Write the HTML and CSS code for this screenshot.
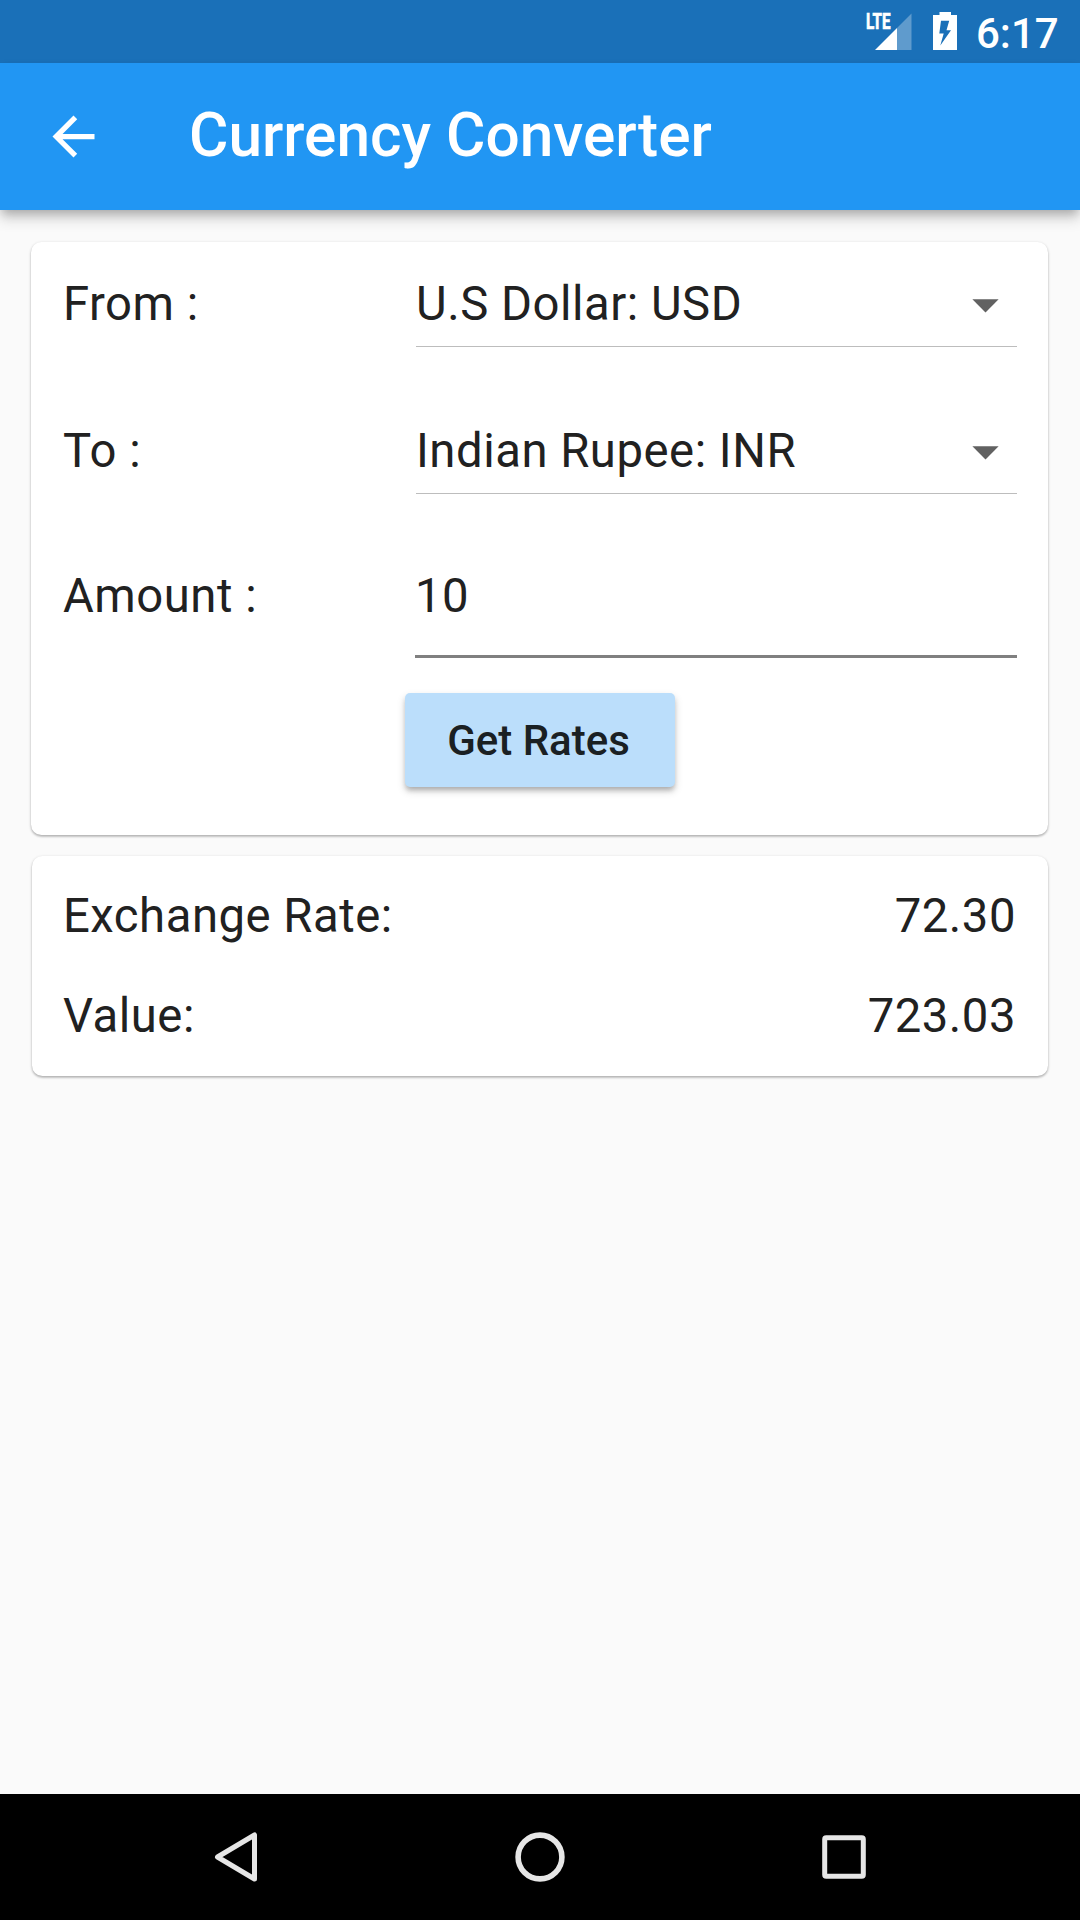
FILE: index.html
```html
<!DOCTYPE html>
<html lang="en">
<head>
<meta charset="utf-8">
<title>Currency Converter</title>
<link rel="stylesheet" href="styles.css">
</head>
<body>
<div class="screen">
  <div class="status-bar">
    <svg class="status-signal" width="48" height="50" viewBox="0 -12 48 50">
      <path d="M46.500 1.500V38H32V16z" fill="#fff" fill-opacity=".3"/>
      <path d="M10 38L32 16V38z" fill="#fff"/>
      <text class="lte" x="1" y="17" textLength="24.500" lengthAdjust="spacingAndGlyphs">LTE</text>
    </svg>
    <svg class="status-battery" width="24" height="38" viewBox="0 0 24 38">
      <path fill="#fff" fill-rule="evenodd" d="M6.500 0H18V3H24V38H0V3H6.500zM8 8.700L6.300 21.500H10.700L7.300 33.500L18 18.200H13.500L16.200 8.700z"/>
    </svg>
    <span class="status-time">6:17</span>
  </div>
  <header class="app-bar">
    <svg class="back-icon" width="63" height="63" viewBox="0 0 24 24"><path fill="#fff" d="M20 11H7.830l5.590-5.590L12 4l-8 8 8 8 1.410-1.410L7.830 13H20v-2z"/></svg>
    <h1 class="app-title">Currency Converter</h1>
  </header>
  <main class="content">
    <section class="card form-card">
      <div class="form-row">
        <span class="label">From :</span>
        <div class="dropdown"><span>U.S Dollar: USD</span><svg width="63" height="63" viewBox="0 0 24 24"><path d="M7 10l5 5 5-5z" fill="#616161"/></svg></div>
      </div>
      <div class="form-row">
        <span class="label">To :</span>
        <div class="dropdown"><span>Indian Rupee: INR</span><svg width="63" height="63" viewBox="0 0 24 24"><path d="M7 10l5 5 5-5z" fill="#616161"/></svg></div>
      </div>
      <div class="form-row amount-row">
        <span class="label">Amount :</span>
        <div class="text-field">10</div>
      </div>
      <button class="rates-button" type="button">Get Rates</button>
    </section>
    <section class="card result-card">
      <div class="result-row"><span>Exchange Rate:</span><span>72.30</span></div>
      <div class="result-row"><span>Value:</span><span>723.03</span></div>
    </section>
  </main>
  <nav class="nav-bar">
    <div class="nav-item"><svg width="60" height="60" viewBox="0 0 60 60"><path d="M48.500 8V52L11.500 30z" fill="none" stroke="#e6e6e6" stroke-width="5" stroke-linejoin="round"/></svg></div>
    <div class="nav-item"><svg width="60" height="60" viewBox="0 0 60 60"><circle cx="30" cy="30" r="21.900" fill="none" stroke="#e6e6e6" stroke-width="5.600"/></svg></div>
    <div class="nav-item"><svg width="60" height="60" viewBox="0 0 60 60"><rect x="10.700" y="10.700" width="38.600" height="38.600" rx="1.500" fill="none" stroke="#e6e6e6" stroke-width="5"/></svg></div>
  </nav>
</div>
</body>
</html>
```
FILE: styles.css
```css
body {
  margin: 0;
  font-family: Roboto, sans-serif;
  color: #212121;
}

.screen {
  display: flex;
  flex-direction: column;
  width: 1080px;
  height: 1920px;
  background: #fafafa;
}

.status-bar {
  display: flex;
  align-items: flex-end;
  box-sizing: border-box;
  height: 63px;
  padding: 0 20px 13px 865px;
  background: #1a70b8;
  color: #fff;
}

.lte {
  font-size: 22px;
  font-weight: 700;
  fill: #fff;
  stroke: #fff;
  stroke-width: 0.7px;
}

.status-battery {
  margin-left: 20px;
}

.status-time {
  margin-left: 19px;
  font-size: 42px;
  font-weight: 500;
  line-height: 33px;
}

.app-bar {
  display: flex;
  align-items: center;
  box-sizing: border-box;
  height: 147px;
  padding-left: 42px;
  background: #2196f3;
  color: #fff;
  box-shadow: 0 5px 10px -2px rgba(0, 0, 0, 0.26), 0 10px 13px rgba(0, 0, 0, 0.12);
}

.app-title {
  margin: 0 0 2px 84px;
  font-size: 60.375px;
  font-weight: 500;
  line-height: 70px;
}

.content {
  display: flex;
  flex: 1;
  flex-direction: column;
  gap: 21px;
  padding: 32px 32px 0 31px;
  font-size: 47.25px;
  letter-spacing: 0.52px;
}

.card {
  box-sizing: border-box;
  border-radius: 10.5px;
  background: #fff;
  box-shadow: 0 1px 3px rgba(0, 0, 0, 0.24), 0 2px 2px rgba(0, 0, 0, 0.12);
}

.form-card {
  display: flex;
  flex-direction: column;
  height: 593px;
  padding: 18px 31px 0 32px;
}

.form-row {
  display: grid;
  grid-template-columns: 352px 1fr;
  height: 87px;
  margin-bottom: 60px;
}

.label {
  line-height: 89px;
}

.dropdown {
  display: flex;
  align-items: center;
  justify-content: space-between;
  box-sizing: border-box;
  height: 87px;
  margin-left: 1px;
  padding-top: 2px;
  border-bottom: 1px solid #bdbdbd;
  line-height: 84px;
}

.amount-row {
  height: 104px;
  margin-bottom: 35px;
}

.amount-row .label {
  line-height: 85px;
}

.text-field {
  box-sizing: border-box;
  height: 104px;
  border-bottom: 3px solid #808080;
  line-height: 85px;
}

.rates-button {
  align-self: center;
  width: 270px;
  height: 94px;
  padding: 0 3px 0 0;
  border: 0;
  border-radius: 5px;
  background: #bbdefb;
  box-shadow: 0 4px 5px -1px rgba(0, 0, 0, 0.22), 0 4px 9px rgba(0, 0, 0, 0.16);
  color: #1a2023;
  font-family: inherit;
  font-size: 42px;
  font-weight: 500;
}

.result-card {
  height: 220px;
  margin-left: 0.6px;
  padding: 10px 32px 0 31.4px;
}

.result-row {
  display: flex;
  justify-content: space-between;
  height: 100px;
  line-height: 100px;
}

.nav-bar {
  display: flex;
  justify-content: center;
  height: 126px;
  background: #000;
}

.nav-item {
  display: flex;
  align-items: center;
  justify-content: center;
  width: 304px;
}
```
